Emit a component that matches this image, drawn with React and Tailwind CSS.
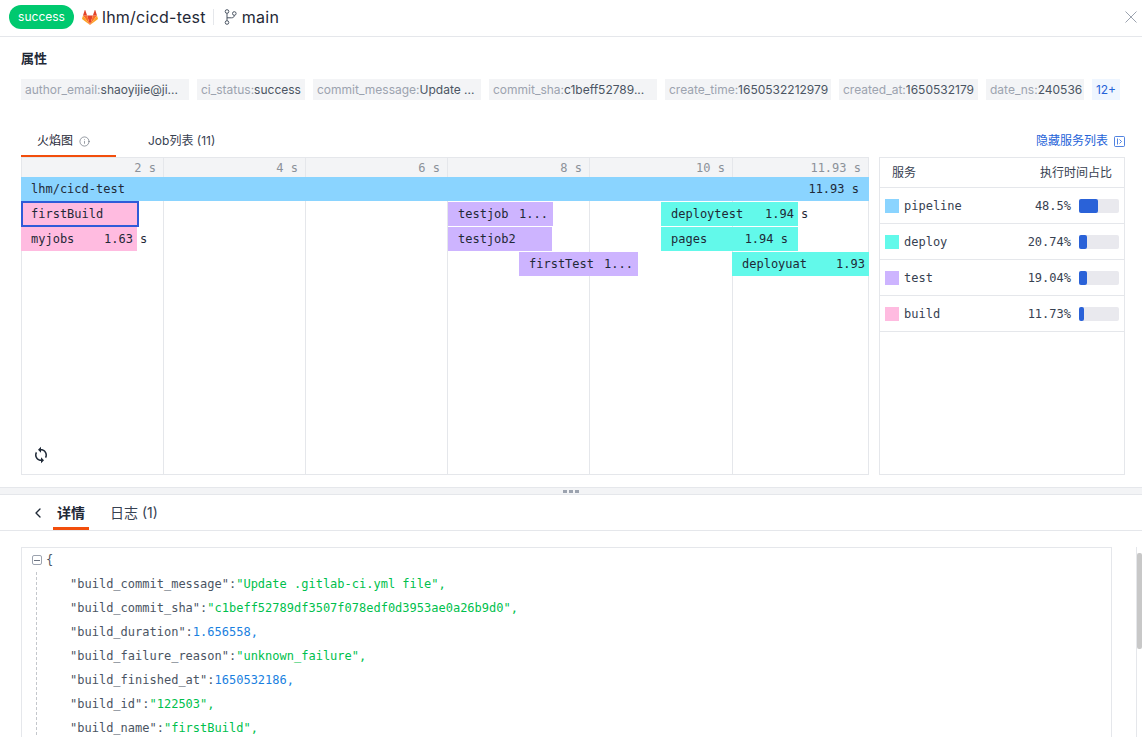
import { Info, ChevronLeft } from "lucide-react";
import { MdSync } from "react-icons/md";

const tags = [
  ["author_email:", "shaoyijie@ji...", "w-[168px]"],
  ["ci_status:", "success", "w-[108px]"],
  ["commit_message:", "Update ...", "w-[168px]"],
  ["commit_sha:", "c1beff52789...", "w-[168px]"],
  ["create_time:", "1650532212979", "w-[166px]"],
  ["created_at:", "1650532179", "w-[139px]"],
  ["date_ns:", "240536", "w-[98px]"],
];

const ticks = [
  ["2 s", "w-[142px]"],
  ["4 s", "w-[142px]"],
  ["6 s", "w-[142px]"],
  ["8 s", "w-[142px]"],
  ["10 s", "w-[143px]"],
  ["11.93 s", "flex-1"],
];

const services = [
  ["pipeline", "48.5%", "bg-[#8ad4ff]", "w-[19px]"],
  ["deploy", "20.74%", "bg-[#62f9ea]", "w-[8px]"],
  ["test", "19.04%", "bg-[#cdb4ff]", "w-[8px]"],
  ["build", "11.73%", "bg-[#ffbbe0]", "w-[5px]"],
];

const jsonRows = [
  ["build_commit_message", '"Update .gitlab-ci.yml file",', "text-[#00bf4d]"],
  ["build_commit_sha", '"c1beff52789df3507f078edf0d3953ae0a26b9d0",', "text-[#00bf4d]"],
  ["build_duration", "1.656558,", "text-[#1a7fe0]"],
  ["build_failure_reason", '"unknown_failure",', "text-[#00bf4d]"],
  ["build_finished_at", "1650532186,", "text-[#1a7fe0]"],
  ["build_id", '"122503",', "text-[#00bf4d]"],
  ["build_name", '"firstBuild",', "text-[#00bf4d]"],
];

function GitlabLogo() {
  return (
    <svg width="16" height="15" viewBox="0 0 16 15">
      <path d="M8 15 5.1 5.6h5.8z" fill="#e24329" />
      <path d="M8 15 5.1 5.6H1z" fill="#fc6d26" />
      <path d="M8 15l2.9-9.4H15z" fill="#fc6d26" />
      <path d="M1 5.6.1 8.5c-.1.3 0 .6.2.7L8 15z" fill="#fca326" />
      <path d="M15 5.6l.9 2.9c.1.3 0 .6-.2.7L8 15z" fill="#fca326" />
      <path d="M1 5.6h4.1L3.3.2c-.1-.3-.5-.3-.6 0z" fill="#e24329" />
      <path d="M15 5.6h-4.1L12.7.2c.1-.3.5-.3.6 0z" fill="#e24329" />
    </svg>
  );
}

function BranchIcon() {
  return (
    <svg width="13" height="16" viewBox="0 0 13 16" fill="none" stroke="#4b5563" strokeWidth="1">
      <circle cx="3" cy="2.5" r="1.8" />
      <circle cx="3" cy="13.5" r="1.8" />
      <circle cx="10.3" cy="4.5" r="1.8" />
      <path d="M3 4.3v7.4M3 8.8h4.5c2 0 2.8-1 2.8-2.5" />
    </svg>
  );
}

function Bar({ className, children }) {
  return (
    <div className={`absolute flex items-center justify-between whitespace-pre text-[#1f2937] ${className}`}>
      {children}
    </div>
  );
}

export default function App() {
  return (
    <div className="flex h-[737px] w-[1142px] flex-col overflow-hidden bg-white font-['Inter','Noto_Sans_CJK_SC',sans-serif] text-[#1f2937]">
      <header className="flex h-[37px] shrink-0 items-center border-b border-[#e5e7eb] pb-[2px] pl-[9px] pr-[5px]">
        <span className="flex h-[24px] w-[65px] items-center justify-center rounded-full bg-[#00c96f] text-[12px] text-white">success</span>
        <span className="ml-[8px]"><GitlabLogo /></span>
        <span className="ml-[4px] text-[16px] tracking-[0.25px]">lhm/cicd-test</span>
        <span className="ml-[7px] h-[16px] w-px bg-[#e5e7eb]" />
        <span className="ml-[10px]"><BranchIcon /></span>
        <span className="ml-[5px] text-[16px] tracking-[0.25px]">main</span>
        <svg width="12" height="12" viewBox="0 0 12 12" stroke="#9ca3af" strokeWidth="1" className="ml-auto">
          <path d="M.5.5l11 11M11.5.5l-11 11" />
        </svg>
      </header>

      <section className="flex h-[450px] shrink-0 flex-col pl-[21px] pr-[17px]">
        <h2 className="mt-[11px] text-[13px] font-bold leading-[20px]">属性</h2>
        <div className="mt-[11px] flex gap-[8px]">
          {tags.map(([key, value, width]) => (
            <div key={key} className={`flex h-[21px] items-center whitespace-nowrap bg-[#f3f4f6] px-[4px] text-[12px] ${width}`}>
              <span className="text-[#9ca3af]">{key}</span>
              <span className="text-[#4b5563]">{value}</span>
            </div>
          ))}
          <div className="flex h-[21px] w-[28px] items-center justify-center bg-[#eff6ff] text-[12px] text-[#2563d8]">12+</div>
        </div>

        <div className="mt-[28px] flex h-[29px] items-start text-[12px]">
          <div className="flex h-[29px] w-[95px] items-start gap-[6px] border-b-2 border-[#f24e0c] pl-[16px] pt-[4px]">
            <span>火焰图</span>
            <Info size={11} strokeWidth={1.25} className="mt-[4px] text-[#4b5563]" />
          </div>
          <div className="ml-[32px] pt-[4px] text-[#374151]">Job列表 (11)</div>
          <div className="ml-auto flex items-center gap-[6px] pt-[4px] text-[#2563d8]">
            <span>隐藏服务列表</span>
            <svg width="11" height="11" viewBox="0 0 11 11" fill="none" stroke="#2563d8" strokeWidth="0.8">
              <rect x="0.5" y="0.5" width="10" height="10" rx="1" />
              <path d="M3.5 2.5v6M5.5 3.5 7.5 5.5l-2 2" />
            </svg>
          </div>
        </div>

        <div className="flex gap-[10px] font-['DejaVu_Sans_Mono',monospace] text-[12px]">
          <div className="relative h-[318px] w-[848px] border-b border-[#e5e7eb]">
            <div className="flex h-full border-l border-[#e5e7eb]">
              {ticks.map(([label, width]) => (
                <div key={label} className={`h-full border-r border-[#e5e7eb] ${width}`}>
                  <div className="flex h-[20px] items-center justify-end border-t border-[#e5e7eb] bg-[#f3f4f6] pr-[7px] text-[#8c9199]">{label}</div>
                </div>
              ))}
            </div>

            <Bar className="left-0 top-[20px] h-[24px] w-[848px] bg-[#8ad4ff] px-[10px]"><span>lhm/cicd-test</span><span>11.93 s</span></Bar>

            <Bar className="left-0 top-[44px] h-[26px] w-[118px] border-2 border-[#2f5bd8] bg-[#ffbbe0] pl-[8px]">firstBuild</Bar>
            <Bar className="left-0 top-[70px] h-[24px] w-[116px] bg-[#ffbbe0] pl-[10px] pr-[4px]"><span>myjobs</span><span>1.63</span></Bar>
            <span className="absolute left-[119px] top-[73px]">s</span>

            <Bar className="left-[427px] top-[45px] h-[24px] w-[105px] bg-[#cdb4ff] pl-[10px] pr-[5px]"><span>testjob</span><span>1...</span></Bar>
            <Bar className="left-[427px] top-[70px] h-[24px] w-[104px] bg-[#cdb4ff] pl-[10px]">testjob2</Bar>
            <Bar className="left-[498px] top-[95px] h-[24px] w-[119px] bg-[#cdb4ff] pl-[10px] pr-[5px]"><span>firstTest</span><span>1...</span></Bar>

            <Bar className="left-[640px] top-[45px] h-[24px] w-[137px] bg-[#62f9ea] pl-[10px] pr-[4px]"><span>deploytest</span><span>1.94</span></Bar>
            <span className="absolute left-[780px] top-[48px]">s</span>
            <Bar className="left-[640px] top-[70px] h-[24px] w-[137px] bg-[#62f9ea] pl-[10px] pr-[10px]"><span>pages</span><span>1.94 s</span></Bar>
            <Bar className="left-[711px] top-[95px] h-[24px] w-[137px] bg-[#62f9ea] pl-[10px] pr-[4px]"><span>deployuat</span><span>1.93</span></Bar>

            <MdSync size={18} className="absolute left-[11px] top-[289px] text-[#1f2937]" />
          </div>

          <div className="h-[318px] w-[246px] border border-[#e5e7eb]">
            <div className="flex h-[30px] items-center justify-between border-b border-[#e5e7eb] px-[12px] font-['Inter','Noto_Sans_CJK_SC',sans-serif] text-[#374151]">
              <span>服务</span>
              <span>执行时间占比</span>
            </div>
            {services.map(([name, pct, color, width]) => (
              <div key={name} className="flex h-[36px] items-center border-b border-[#e5e7eb] px-[5px] text-[#374151]">
                <span className={`h-[14px] w-[14px] ${color}`} />
                <span className="ml-[5px]">{name}</span>
                <span className="ml-auto mr-[8px]">{pct}</span>
                <span className="h-[14px] w-[40px] rounded-[2px] bg-[#e9e9ee]">
                  <span className={`block h-full rounded-[2px] bg-[#2a62d8] ${width}`} />
                </span>
              </div>
            ))}
          </div>
        </div>
      </section>

      <div className="flex h-[8px] shrink-0 items-center justify-center gap-[2px] border-y border-[#e5e7eb] bg-[#f3f4f6]">
        <span className="h-[3px] w-[4px] bg-[#9ca3af]" />
        <span className="h-[3px] w-[4px] bg-[#9ca3af]" />
        <span className="h-[3px] w-[4px] bg-[#9ca3af]" />
      </div>

      <div className="flex h-[36px] shrink-0 items-stretch border-b border-[#e5e7eb] pl-[30px] text-[14px]">
        <ChevronLeft size={16} className="mt-[10px] text-[#1f2937]" />
        <div className="ml-[7px] w-[36px] border-b-[3px] border-[#f24e0c] pt-[7px] text-center font-bold">详情</div>
        <div className="ml-[21px] pt-[7px] text-[#374151]">日志 (1)</div>
      </div>

      <div className="flex min-h-0 flex-1 pl-[21px] pt-[16px]">
        <div className="w-[1091px] border border-b-0 border-[#e5e7eb] pl-[10px] font-['DejaVu_Sans_Mono',monospace] text-[12px] text-[#4b5563]">
          <div className="flex h-[24px] items-center gap-[4px]">
            <span className="flex h-[10px] w-[10px] items-center justify-center rounded-[2px] border border-[#9ca3af]">
              <span className="h-px w-[6px] bg-[#6b7280]" />
            </span>
            <span>{"{"}</span>
          </div>
          <div className="ml-[4px] border-l border-dashed border-[#c4c7cc] pl-[33px]">
            {jsonRows.map(([key, value, color]) => (
              <div key={key} className="flex h-[24px] items-center whitespace-pre">
                <span>"{key}":</span>
                <span className={color}>{value}</span>
              </div>
            ))}
          </div>
        </div>
        <div className="ml-[24px] w-[6px] border-l border-[#e5e7eb] pt-[6px]">
          <div className="h-[96px] w-[5px] rounded-[2px] bg-[#c8c8c8]" />
        </div>
      </div>
    </div>
  );
}
